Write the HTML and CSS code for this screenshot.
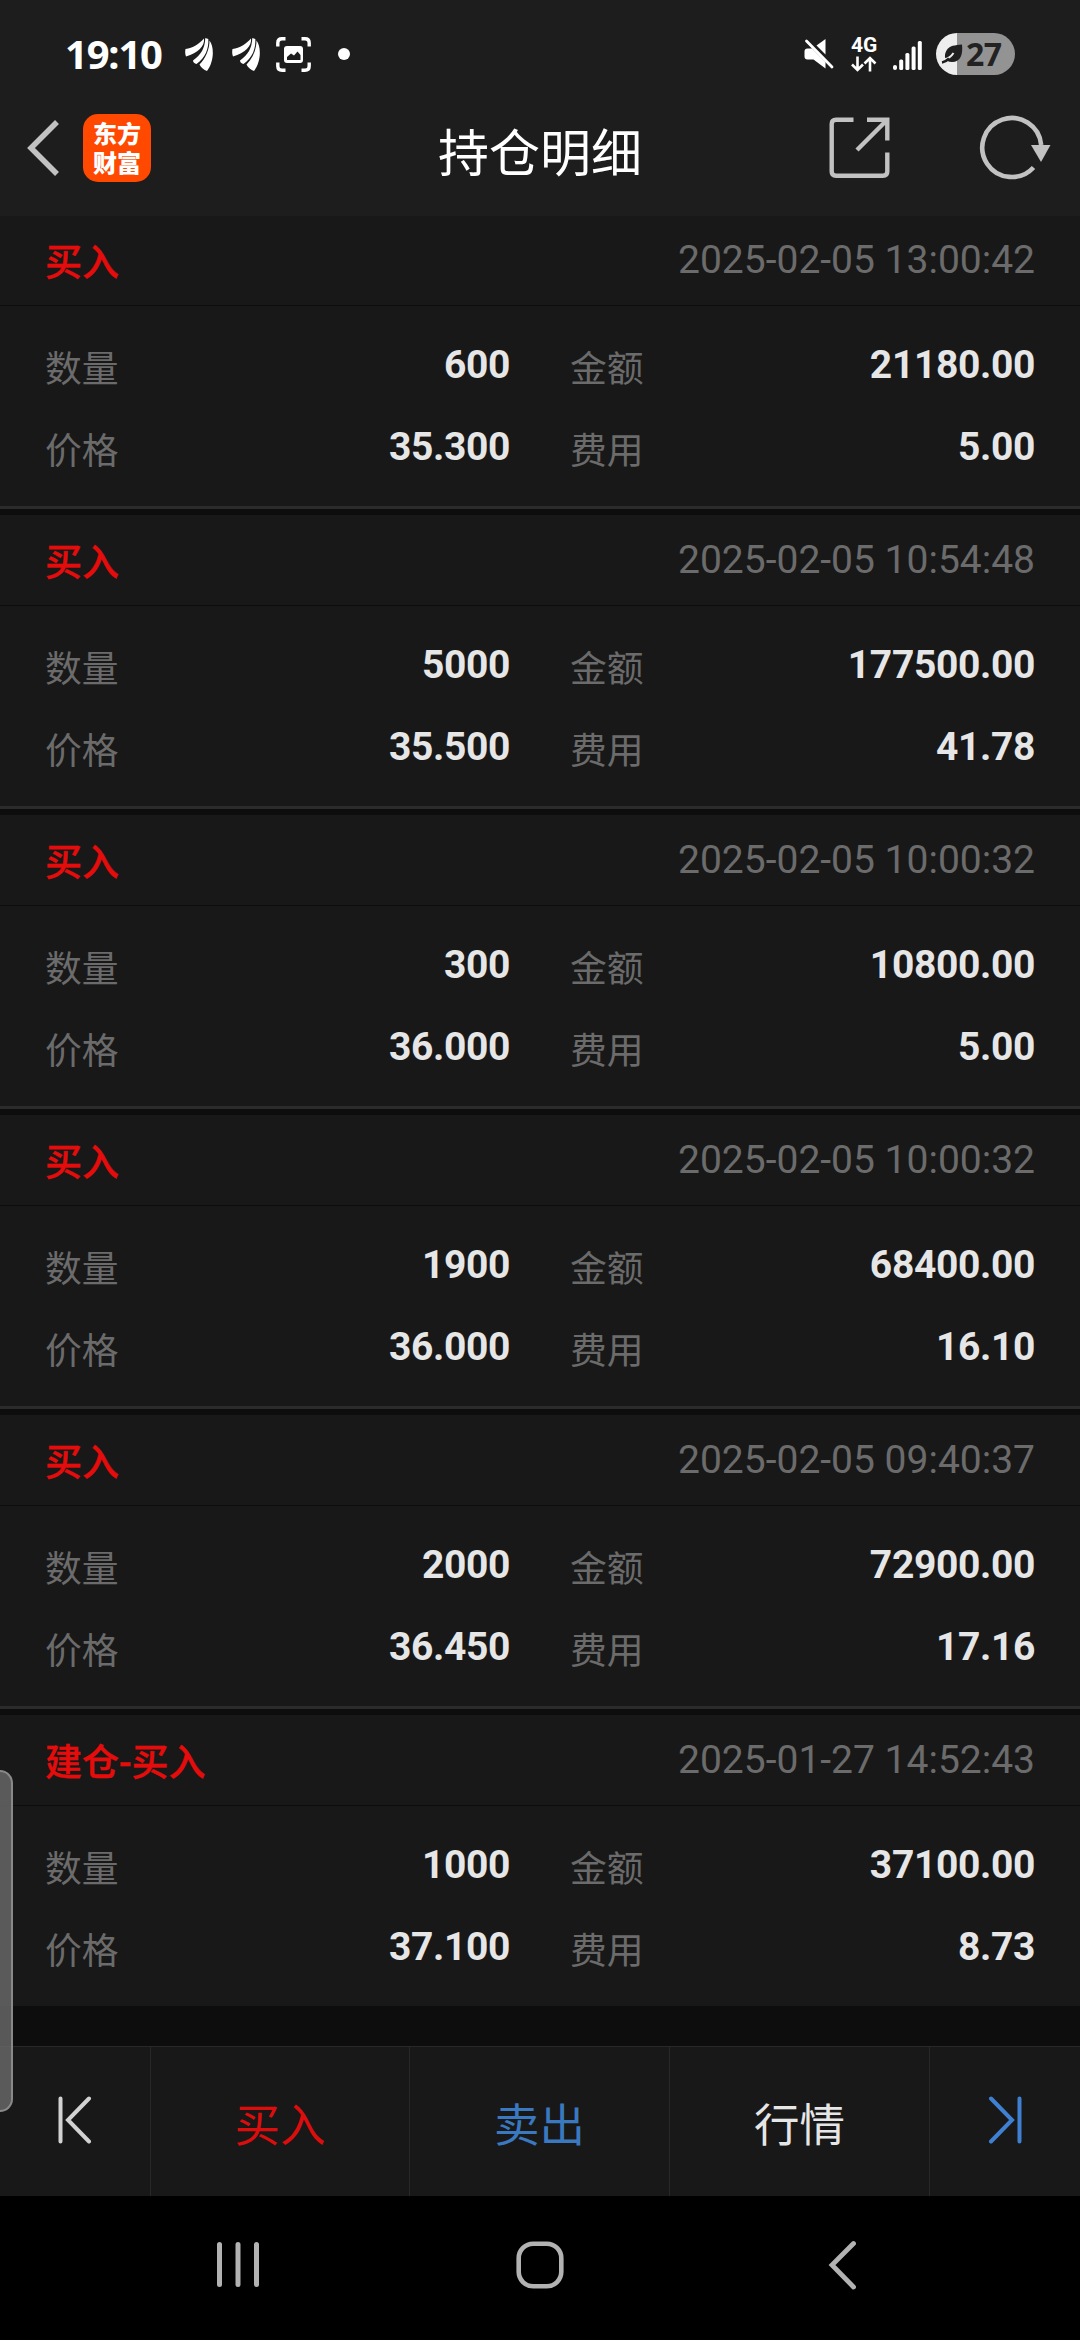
FILE: index.html
```html
<!DOCTYPE html>
<html lang="zh-CN">
<head>
<meta charset="utf-8">
<title>持仓明细</title>
<link rel="stylesheet" href="styles.css">
</head>
<body>
<svg class="defs" width="0" height="0" aria-hidden="true">
  <symbol id="brand" viewBox="0 0 28 33">
    <path d="M0.500 11C8 10 14 6 19 0.500C20 8 13 15 1 18.500C0 16 0 13 0.500 11Z"/>
    <path d="M8 22.500C16 17 20 10 20.300 0L23.300 1C24 10 20.500 20 11.500 26C9.500 25.500 8 24.500 8 22.500Z"/>
    <path d="M14.500 26.500C21 20 24.500 11 24.500 2.500C29.500 9 29 24 22 33C19 32 16 29.500 14.500 26.500Z"/>
  </symbol>
</svg>
<div class="screen">
  <header class="top">
    <div class="status">
      <span class="time">19:10</span>
      <svg class="brand" width="28" height="33"><use href="#brand"/></svg>
      <svg class="brand" width="28" height="33"><use href="#brand"/></svg>
      <svg class="capture" width="35" height="35" viewBox="0 0 35 35">
        <path d="M1.8 9.5V6Q1.8 1.8 6 1.8H9.5M25.5 1.8H29Q33.2 1.8 33.2 6V9.5M33.2 25.500V29Q33.2 33.2 29 33.2H25.500M9.5 33.2H6Q1.800 33.2 1.800 29V25.500" fill="none" stroke="#fff" stroke-width="3.4"/>
        <rect x="8" y="9" width="19" height="17" rx="3" fill="#fff"/>
        <path d="M11 23V20L15 16.500L18 18.500L21.500 14.500L24.500 18V23Z" fill="#1d1d1d"/>
      </svg>
      <i class="dot"></i>
      <svg class="mute" width="30" height="30" viewBox="0 0 30 30">
        <path d="M0.500 12.500Q0.500 9.500 3.500 9.500H8L21.500 23V29.500L9.500 20.500H3.500Q0.500 20.500 0.500 17.500Z" fill="#fff"/>
        <path d="M12.500 6.500L21.500 0V15.500Z" fill="#fff"/>
        <path d="M2.500 2L28 28" stroke="#fff" stroke-width="2.800" stroke-linecap="round"/>
      </svg>
      <span class="network">
        <span class="gen">4G</span>
        <svg width="26" height="16" viewBox="0 0 26 16" fill="none" stroke="#fff" stroke-width="2.600">
          <path d="M6.500 0.500V13.500M1 8.500L6.500 14L12 8.500M19 15.500V2.500M13.500 7.500L19 2L24.500 7.500"/>
        </svg>
      </span>
      <svg class="signal" width="29" height="30" viewBox="0 0 29 30" fill="#fff">
        <rect x="0" y="25" width="4" height="5" rx="2"/><rect x="6.200" y="19.500" width="4" height="10.500" rx="1.500"/><rect x="12.400" y="13" width="4" height="17" rx="1.500"/><rect x="18.600" y="6.500" width="4" height="23.500" rx="1.500"/><rect x="24.800" y="1" width="4" height="29" rx="1.500"/>
      </svg>
      <span class="battery">
        <svg width="22" height="20" viewBox="0 0 22 20">
          <path d="M21 0.500C22 10 20 18 11 18C3.500 18 2.500 12 5.500 6.500C8.500 1 14 1.500 21 0.500Z" fill="#1f1f1f"/>
          <path d="M12.500 9Q9 14.500 3 15.500" stroke="#eee" stroke-width="2" fill="none"/>
          <path d="M1 18.500Q4.500 18 8 14.500" stroke="#1f1f1f" stroke-width="2.500" fill="none"/>
        </svg>
        <span>27</span>
      </span>
    </div>
    <div class="titlebar">
      <svg class="back" width="32" height="56" viewBox="0 0 32 56"><path d="M30 2L4 28L30 54" fill="none" stroke="#c2c2c2" stroke-width="5.500"/></svg>
      <div class="logo"><span>东方</span><span>财富</span></div>
      <h1>持仓明细</h1>
      <svg class="share" width="62" height="62" viewBox="0 0 62 62" fill="none" stroke="#c2c2c2" stroke-width="4.400">
        <path d="M24.500 2.700H7Q2.700 2.700 2.700 7V54.500Q2.700 58.800 7 58.800H54Q58.300 58.800 58.300 54.500V35.500M38 2.700H58.300V23.500M57.500 3.500L28 33"/>
      </svg>
      <svg class="reload" width="72" height="66" viewBox="0 0 72 66">
        <path d="M62.200 30A29.500 29.500 0 1 0 54.500 52.500" fill="none" stroke="#c2c2c2" stroke-width="4.600"/>
        <path d="M52 30H71.500L62 47Z" fill="#c2c2c2"/>
      </svg>
    </div>
  </header>

  <main class="list">
    <section class="card">
      <div class="head"><b>买入</b><time>2025-02-05 13:00:42</time></div>
      <dl><div><dt>数量</dt><dd>600</dd></div><div><dt>金额</dt><dd>21180.00</dd></div><div><dt>价格</dt><dd>35.300</dd></div><div><dt>费用</dt><dd>5.00</dd></div></dl>
    </section>
    <section class="card">
      <div class="head"><b>买入</b><time>2025-02-05 10:54:48</time></div>
      <dl><div><dt>数量</dt><dd>5000</dd></div><div><dt>金额</dt><dd>177500.00</dd></div><div><dt>价格</dt><dd>35.500</dd></div><div><dt>费用</dt><dd>41.78</dd></div></dl>
    </section>
    <section class="card">
      <div class="head"><b>买入</b><time>2025-02-05 10:00:32</time></div>
      <dl><div><dt>数量</dt><dd>300</dd></div><div><dt>金额</dt><dd>10800.00</dd></div><div><dt>价格</dt><dd>36.000</dd></div><div><dt>费用</dt><dd>5.00</dd></div></dl>
    </section>
    <section class="card">
      <div class="head"><b>买入</b><time>2025-02-05 10:00:32</time></div>
      <dl><div><dt>数量</dt><dd>1900</dd></div><div><dt>金额</dt><dd>68400.00</dd></div><div><dt>价格</dt><dd>36.000</dd></div><div><dt>费用</dt><dd>16.10</dd></div></dl>
    </section>
    <section class="card">
      <div class="head"><b>买入</b><time>2025-02-05 09:40:37</time></div>
      <dl><div><dt>数量</dt><dd>2000</dd></div><div><dt>金额</dt><dd>72900.00</dd></div><div><dt>价格</dt><dd>36.450</dd></div><div><dt>费用</dt><dd>17.16</dd></div></dl>
    </section>
    <section class="card">
      <div class="head"><b>建仓-买入</b><time>2025-01-27 14:52:43</time></div>
      <dl><div><dt>数量</dt><dd>1000</dd></div><div><dt>金额</dt><dd>37100.00</dd></div><div><dt>价格</dt><dd>37.100</dd></div><div><dt>费用</dt><dd>8.73</dd></div></dl>
    </section>
  </main>

  <footer class="actions">
    <span class="step"><svg width="34" height="48" viewBox="0 0 34 48" fill="none" stroke="#d2d2d2" stroke-width="4" stroke-linecap="round"><path d="M2.500 2.500V45.500M31 2.500L10 24L31 45.500"/></svg></span>
    <span class="buy">买入</span>
    <span class="sell">卖出</span>
    <span class="quote">行情</span>
    <span class="step"><svg width="34" height="48" viewBox="0 0 34 48" fill="none" stroke="#3f80d2" stroke-width="4" stroke-linecap="round"><path d="M31.500 2.500V45.500M3 2.500L24 24L3 45.500"/></svg></span>
  </footer>

  <nav class="system">
    <span><svg width="42" height="48" viewBox="0 0 42 48" stroke="#b2b2b2" stroke-width="5" stroke-linecap="round"><path d="M2.500 3.500V43.500M21 3.500V43.500M39.500 3.500V43.500"/></svg></span>
    <span><svg width="48" height="48" viewBox="0 0 48 48"><rect x="2.700" y="2.700" width="42.600" height="42.600" rx="14.500" fill="none" stroke="#b2b2b2" stroke-width="4.600"/></svg></span>
    <span><svg width="28" height="50" viewBox="0 0 28 50"><path d="M25.500 3.500L4 25L25.500 47" fill="none" stroke="#b2b2b2" stroke-width="4.800" stroke-linecap="round"/></svg></span>
  </nav>
  <div class="edge-handle"></div>
</div>
</body>
</html>
```
FILE: styles.css
```css
* { box-sizing: border-box; margin: 0; padding: 0; }
body {
  background: #000;
  font-family: Roboto, "Noto Sans CJK SC", sans-serif;
  color: #e6e6e6;
}
svg { display: block; flex: none; }
.defs { position: absolute; }
.screen {
  position: relative;
  width: 1080px;
  height: 2340px;
  display: flex;
  flex-direction: column;
  overflow: hidden;
}

.top { height: 216px; background: #1d1d1d; }
.status {
  height: 108px;
  padding: 0 65px;
  display: flex;
  align-items: center;
}
.time {
  width: 120px;
  font: 700 40px/44px "Noto Sans", sans-serif;
  letter-spacing: -1.2px;
  color: #fff;
}
.brand { margin-right: 19px; fill: #fff; }
.capture { margin-left: -3px; }
.dot { width: 12px; height: 12px; margin-left: 27px; border-radius: 50%; background: #fff; }
.mute { margin-left: auto; }
.network { width: 26px; margin-left: 17px; display: grid; gap: 3px; }
.gen { font: 700 21px/16px Roboto, sans-serif; color: #fff; }
.signal { margin: 2px 14px 0 16px; }
.battery {
  width: 79px;
  height: 42px;
  padding-left: 5px;
  display: flex;
  align-items: center;
  gap: 3px;
  border-radius: 21px;
  background: linear-gradient(90deg, #eee 21px, #939393 21px);
  font: 700 32px/42px "Noto Sans", sans-serif;
  letter-spacing: -0.5px;
  color: #222;
}

.titlebar {
  height: 80px;
  padding: 0 29px 0 27px;
  display: grid;
  grid-template-columns: 56px 68px 1fr 62px 160px;
  align-items: center;
}
.logo {
  height: 68px;
  padding-top: 4px;
  border-radius: 15px;
  background: #ff4800;
  display: grid;
  grid-template-rows: 29px 29px;
  font: 900 24px/29px "Noto Sans CJK SC", sans-serif;
  text-align: center;
  color: #fff;
}
h1 {
  margin: 13px 0 0 115px;
  width: 548px;
  font-size: 51px;
  font-weight: 400;
  line-height: 60px;
  text-align: center;
  white-space: nowrap;
  color: #fff;
}
.share { margin-left: -0.5px; }
.reload { justify-self: end; }

.list { height: 1830px; background: #0d0d0d; }
.card {
  height: 294px;
  margin-bottom: 6px;
  background: #181818;
  border-bottom: 3px solid #2b2b2b;
}
.card:first-child { height: 293px; }
.card:first-child .head { height: 90px; }
.card:last-child { height: 291px; border-bottom: 0; }
.head {
  height: 91px;
  padding: 0 45px;
  display: flex;
  justify-content: space-between;
  border-bottom: 1px solid #0d0d0d;
  line-height: 90px;
}
.card:first-child .head { line-height: 88px; }
.head b {
  padding-top: 4px;
  font-size: 37px;
  font-weight: 500;
  color: #e60c0c;
  -webkit-text-stroke: 0.4px #e60c0c;
}
.head time { font-size: 39px; color: #6b6b6b; }
dl {
  padding: 18px 45px 0;
  display: grid;
  grid-template-columns: 465px 465px;
  column-gap: 60px;
}
dl div { height: 82px; display: flex; justify-content: space-between; line-height: 82px; }
dt { padding-top: 5px; font-size: 36.800px; color: #6b6b6b; }
dd { font-size: 39px; font-weight: 700; letter-spacing: -0.35px; }

.actions {
  height: 150px;
  display: grid;
  grid-template-columns: 150px 259px 260px 260px 151px;
  border-top: 1px solid #282828;
  background: #181818;
  font-size: 45.500px;
  line-height: 149px;
  text-align: center;
}
.actions span + span { border-left: 1px solid #282828; }
.step { display: grid; justify-items: center; padding-top: 49px; }
.buy, .sell, .quote { padding-top: 5px; height: 149px; }
.buy { color: #dc0d0d; }
.sell { color: #3a78c0; }

.system {
  height: 144px;
  padding: 0 87px 6px;
  display: grid;
  grid-template-columns: repeat(3, 302px);
  place-items: center;
}

.edge-handle {
  position: absolute;
  left: -3px;
  top: 1770px;
  width: 16px;
  height: 342px;
  border: 2px solid rgba(150, 150, 150, .8);
  border-radius: 0 13px 13px 0;
  background: rgba(105, 105, 105, .82);
}
```
